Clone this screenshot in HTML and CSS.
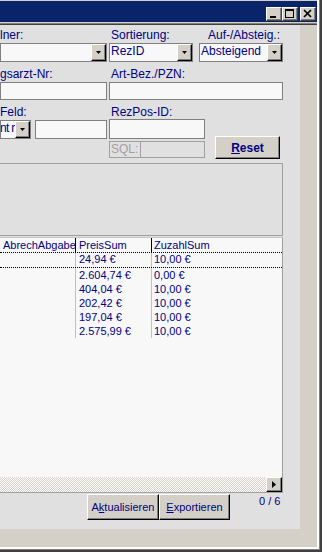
FILE: index.html
```html
<!DOCTYPE html>
<html lang="de">
<head>
    <meta charset="UTF-8">
    <meta name="viewport" content="width=device-width, initial-scale=1.0">
    <title>Rezeptsuche</title>
    <link rel="stylesheet" href="styles.css">
</head>
<body>
    <div class="window">
        <div class="titlebar">
            <span class="cap-btn">
                <svg width="14" height="12" viewBox="0 0 14 12"><rect x="3" y="8" width="6" height="2" fill="#000"/></svg>
            </span>
            <span class="cap-btn">
                <svg width="14" height="12" viewBox="0 0 14 12"><rect x="2.5" y="1.5" width="8" height="8" fill="none" stroke="#000"/><rect x="2" y="1" width="9" height="2" fill="#000"/></svg>
            </span>
            <span class="cap-btn cap-close">
                <svg width="14" height="12" viewBox="0 0 14 12"><path d="M3 2L10 9M10 2L3 9" stroke="#000" stroke-width="1.7"/></svg>
            </span>
        </div>
        <div class="title-sep"></div>

        <div class="client">
            <div class="panel">
                <!-- Filter row 1 -->
                <div class="row row-1">
                    <div class="field field-rechner">
                        <label>lner:</label>
                        <div class="combo">
                            <span class="combo-text"></span>
                            <span class="drop"><svg width="5" height="3" viewBox="0 0 5 3"><path d="M0 0h5L2.5 3z"/></svg></span>
                        </div>
                    </div>
                    <div class="field field-sort">
                        <label>Sortierung:</label>
                        <div class="combo">
                            <span class="combo-text">RezID</span>
                            <span class="drop"><svg width="5" height="3" viewBox="0 0 5 3"><path d="M0 0h5L2.5 3z"/></svg></span>
                        </div>
                    </div>
                    <div class="field field-order">
                        <label>Auf-/Absteig.:</label>
                        <div class="combo">
                            <span class="combo-text">Absteigend</span>
                            <span class="drop"><svg width="5" height="3" viewBox="0 0 5 3"><path d="M0 0h5L2.5 3z"/></svg></span>
                        </div>
                    </div>
                </div>

                <!-- Filter row 2 -->
                <div class="row row-2">
                    <div class="field field-arzt">
                        <label>gsarzt-Nr:</label>
                        <div class="edit"></div>
                    </div>
                    <div class="field field-pzn">
                        <label>Art-Bez./PZN:</label>
                        <div class="edit"></div>
                    </div>
                </div>

                <!-- Filter row 3 -->
                <div class="row row-3">
                    <div class="field field-feld">
                        <label>Feld:</label>
                        <div class="feld-controls">
                            <div class="combo combo-small">
                                <span class="combo-text">nt r</span>
                                <span class="drop"><svg width="5" height="3" viewBox="0 0 5 3"><path d="M0 0h5L2.5 3z"/></svg></span>
                            </div>
                            <div class="edit edit-feld"></div>
                        </div>
                    </div>
                    <div class="field field-rezpos">
                        <label>RezPos-ID:</label>
                        <div class="edit edit-rezpos"></div>
                        <div class="sql-box">
                            <span class="sql-label">SQL:</span>
                            <span class="sql-value"></span>
                        </div>
                    </div>
                    <button class="btn btn-reset"><span class="accel">R</span>eset</button>
                </div>

                <div class="info-box"></div>

                <!-- Result grid -->
                <div class="grid">
                    <div class="grid-row grid-head">
                        <div class="cell c1">AbrechAbgabe</div>
                        <div class="cell c2">PreisSum</div>
                        <div class="cell c3">ZuzahlSum</div>
                    </div>
                    <div class="grid-row data focused">
                        <div class="cell c1"></div>
                        <div class="cell c2">24,94 €</div>
                        <div class="cell c3">10,00 €</div>
                    </div>
                    <div class="grid-row data">
                        <div class="cell c1"></div>
                        <div class="cell c2">2.604,74 €</div>
                        <div class="cell c3">0,00 €</div>
                    </div>
                    <div class="grid-row data">
                        <div class="cell c1"></div>
                        <div class="cell c2">404,04 €</div>
                        <div class="cell c3">10,00 €</div>
                    </div>
                    <div class="grid-row data">
                        <div class="cell c1"></div>
                        <div class="cell c2">202,42 €</div>
                        <div class="cell c3">10,00 €</div>
                    </div>
                    <div class="grid-row data">
                        <div class="cell c1"></div>
                        <div class="cell c2">197,04 €</div>
                        <div class="cell c3">10,00 €</div>
                    </div>
                    <div class="grid-row data">
                        <div class="cell c1"></div>
                        <div class="cell c2">2.575,99 €</div>
                        <div class="cell c3">10,00 €</div>
                    </div>
                    <div class="grid-fill"></div>
                    <div class="hscroll">
                        <div class="hscroll-track"></div>
                        <span class="scroll-btn"><svg width="4" height="7" viewBox="0 0 4 7"><path d="M0 0L4 3.5L0 7z"/></svg></span>
                    </div>
                </div>

                <div class="btn-row">
                    <button class="btn btn-refresh">A<span class="accel">k</span>tualisieren</button>
                    <button class="btn btn-export"><span class="accel">E</span>xportieren</button>
                    <span class="counter">0 / 6</span>
                </div>
            </div>
        </div>
    </div>
</body>
</html>
```

FILE: styles.css
```css
body {
    margin: 0;
    font-family: "Liberation Sans", Arial, sans-serif;
    font-size: 12px;
    color: #000080;
    background-color: #d4d0c8;
}
.window {
    width: 322px;
    height: 552px;
    box-sizing: border-box;
    padding: 1px 5px 5px 0;
    background-color: #d4d0c8;
    box-shadow: inset -2px -2px #404040, inset -3px -3px #808080, inset -5px -5px #ffffff;
}
.titlebar {
    height: 21px;
    box-sizing: border-box;
    background-color: #0a246a;
    display: flex;
    justify-content: flex-end;
    align-items: flex-start;
    padding: 6px 1px 0 0;
}
.cap-btn {
    width: 16px;
    height: 14px;
    box-sizing: border-box;
    background-color: #d4d0c8;
    border: 1px solid;
    border-color: #ffffff #404040 #404040 #ffffff;
    box-shadow: inset -1px -1px #808080;
    display: flex;
}
.cap-close {
    margin-left: 2px;
}
.title-sep {
    height: 1px;
    background-color: #808080;
    border-top: 1px solid #d4d0c8;
    border-bottom: 1px solid #404040;
}
.client {
    height: 522px;
    display: flex;
}
.panel {
    width: 300px;
    height: 504px;
    background-color: #e0e0e0;
    padding-top: 3px;
    box-sizing: border-box;
    display: flex;
    flex-direction: column;
}

/* filter fields */
.row {
    display: flex;
    align-items: flex-start;
}
.row-2,
.row-3 {
    margin-top: 5px;
}
.field label {
    display: block;
    line-height: 14px;
    white-space: nowrap;
}
.field-rechner { width: 107px; }
.field-sort { width: 84px; margin-left: 2px; }
.field-sort label { padding-left: 2px; }
.field-order { width: 84px; margin-left: 6px; }
.field-order label { padding-left: 9px; }
.field-arzt { width: 107px; }
.field-pzn { width: 174px; margin-left: 2px; }
.field-pzn label { padding-left: 2px; }
.field-feld { width: 107px; }
.field-rezpos { width: 96px; margin-left: 2px; }
.field-rezpos label { padding-left: 2px; }

.combo {
    height: 19px;
    margin-top: 1px;
    box-sizing: border-box;
    border: 1px solid #808080;
    background-color: #f8f8f8;
    display: flex;
}
.combo-text {
    flex: 1;
    min-width: 0;
    overflow: hidden;
    white-space: nowrap;
    padding-left: 1px;
    line-height: 14px;
}
.drop {
    width: 15px;
    flex-shrink: 0;
    box-sizing: border-box;
    background-color: #d4d0c8;
    border: 1px solid;
    border-color: #ffffff #000000 #000000 #ffffff;
    box-shadow: inset -1px -1px #808080;
    display: flex;
    align-items: center;
    justify-content: center;
}
.edit {
    height: 18px;
    margin-top: 1px;
    box-sizing: border-box;
    border: 1px solid #808080;
    background-color: #f8f8f8;
}
.feld-controls {
    display: flex;
    gap: 4px;
    margin-top: 1px;
}
.feld-controls .combo,
.feld-controls .edit {
    margin-top: 0;
}
.combo-small { width: 31px; height: 19px; }
.combo-small .combo-text {
    padding-left: 0;
    letter-spacing: -0.7px;
    text-indent: -1px;
}
.edit-feld { width: 72px; height: 19px; }
.edit-rezpos { height: 20px; margin-top: 0; }

.sql-box {
    height: 17px;
    margin-top: 2px;
    box-sizing: border-box;
    border: 1px solid #a0a0a0;
    display: flex;
    color: #a0a0a0;
}
.sql-label {
    width: 29px;
    border-right: 1px solid #a0a0a0;
    padding-left: 1px;
    line-height: 14px;
}

/* buttons */
.btn {
    box-sizing: border-box;
    border: 1px solid;
    border-color: #ffffff #000000 #000000 #ffffff;
    box-shadow: inset -1px -1px #808080;
    background-color: #d4d0c8;
    color: #000080;
    font-family: inherit;
    font-size: 11px;
    padding: 0;
    display: flex;
    align-items: center;
    justify-content: center;
}
.accel {
    text-decoration: underline;
}
.btn-reset {
    width: 65px;
    height: 23px;
    margin: 31px 0 0 10px;
    font-size: 12px;
    font-weight: bold;
}

.info-box {
    width: 283px;
    height: 73px;
    margin-top: 4px;
    box-sizing: border-box;
    border: 1px solid #a0a0a0;
    border-left: none;
}

/* result grid */
.grid {
    width: 283px;
    height: 256px;
    margin-top: 1px;
    box-sizing: border-box;
    background-color: #f8f8f8;
    border-top: 1px solid #c8c8c8;
    border-right: 1px solid #a0a0a0;
    border-bottom: 1px solid #a0a0a0;
    display: flex;
    flex-direction: column;
    font-size: 11px;
}
.grid-row {
    display: flex;
    height: 14px;
    line-height: 14px;
    flex-shrink: 0;
}
.cell {
    box-sizing: border-box;
    white-space: nowrap;
    overflow: hidden;
}
.c1 { width: 76px; padding-left: 3px; }
.c2 { width: 76px; padding-left: 3px; }
.c3 { flex: 1; padding-left: 2px; }
.grid-head .c1,
.grid-head .c2 {
    border-right: 1px solid #000000;
}
.data .c1,
.data .c2 {
    border-right: 1px solid #c0c0c0;
}
.focused {
    border-top: 1px dotted #000000;
    border-bottom: 1px dotted #000000;
    line-height: 12px;
}
.grid-fill {
    flex: 1;
}
.hscroll {
    height: 15px;
    display: flex;
    flex-shrink: 0;
}
.hscroll-track {
    flex: 1;
    background: repeating-conic-gradient(#ffffff 0 25%, #d4d0c8 0 50%) 0 0 / 2px 2px;
}
.scroll-btn {
    width: 16px;
    box-sizing: border-box;
    background-color: #d4d0c8;
    border: 1px solid;
    border-color: #ffffff #000000 #000000 #ffffff;
    box-shadow: inset -1px -1px #808080;
    display: flex;
    align-items: center;
    justify-content: center;
}

.btn-row {
    display: flex;
    align-items: flex-start;
    margin-top: 1px;
    padding-left: 87px;
}
.btn-refresh { width: 72px; height: 26px; }
.btn-export { width: 71px; height: 26px; }
.counter {
    margin: 1px 0 0 29px;
    font-size: 11px;
    line-height: 13px;
}
```
